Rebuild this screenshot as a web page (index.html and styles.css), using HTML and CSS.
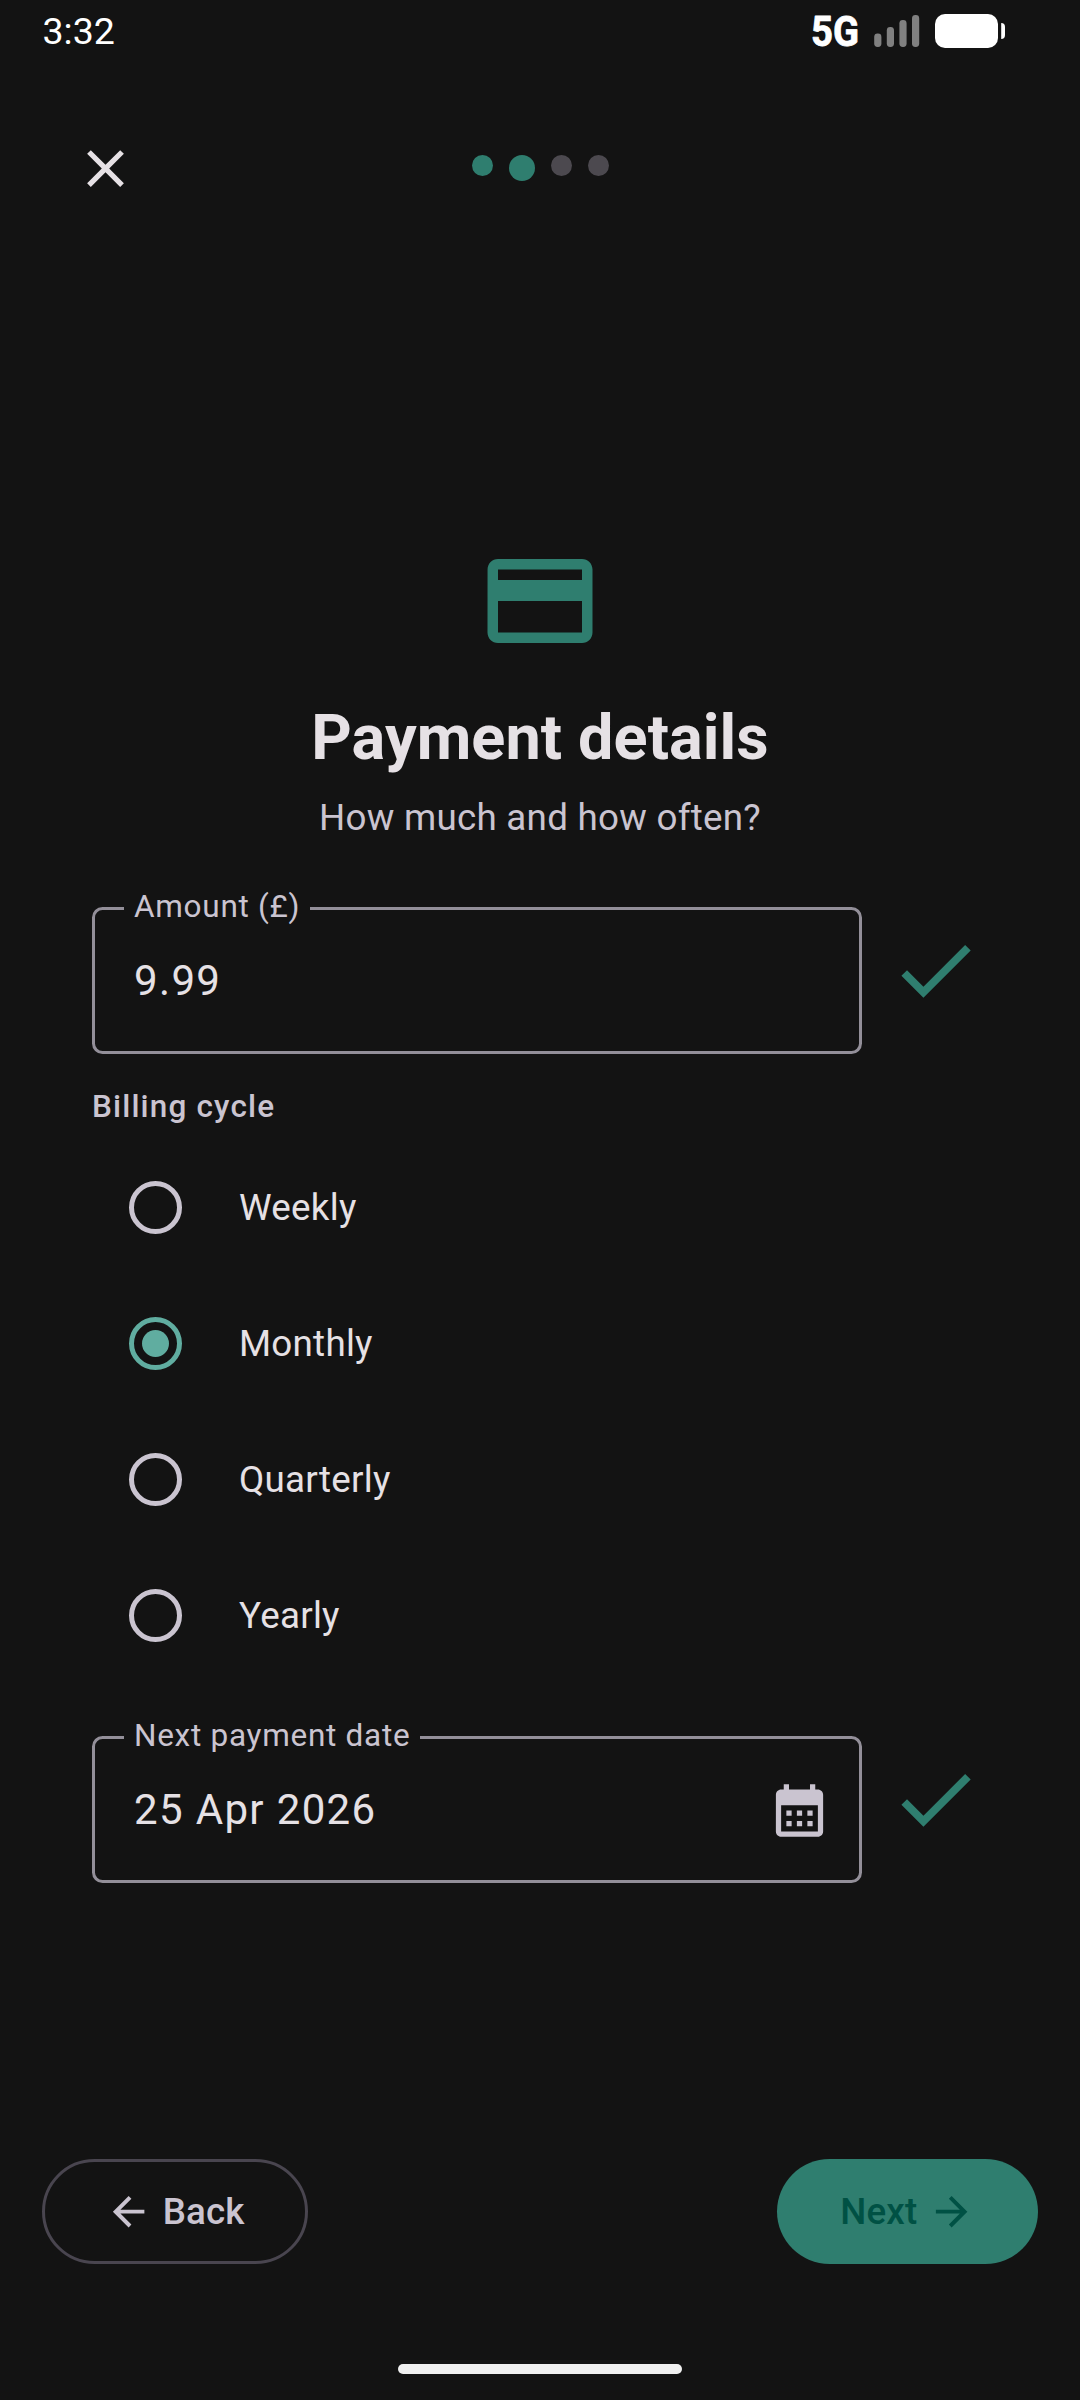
FILE: index.html
```html
<!DOCTYPE html>
<html lang="en">
<head>
<meta charset="utf-8">
<title>Payment details</title>
<link rel="stylesheet" href="styles.css">
</head>
<body>
<div class="screen">
  <div class="status-bar">
    <span class="clock">3:32</span>
    <svg class="status-icons" width="195" height="62" viewBox="-1 0 195 62" aria-label="Signal and battery">
      <text class="network" x="-1" y="46" textLength="48" lengthAdjust="spacingAndGlyphs">5G</text>
      <g fill="#808080">
        <rect x="62.2" y="33.5" width="7.2" height="13.5" rx="3.4"/>
        <rect x="74.8" y="27" width="7.2" height="20" rx="3.4"/>
        <rect x="87.4" y="20" width="7.2" height="27" rx="3.4"/>
        <rect x="100" y="15" width="7.2" height="32" rx="3.4"/>
      </g>
      <rect x="123" y="14" width="63" height="34" rx="10" fill="#fff"/>
      <path d="M189.2 23c2.600 0 3.800 1.500 3.800 4v8c0 2.500-1.200 4-3.800 4z" fill="#fff"/>
    </svg>
  </div>

  <header class="top-bar">
    <button class="close" aria-label="Close">
      <svg viewBox="0 0 24 24"><path d="M19 6.410L17.590 5 12 10.590 6.410 5 5 6.410 10.590 12 5 17.590 6.410 19 12 13.410 17.590 19 19 17.590 13.410 12z"/></svg>
    </button>
    <div class="steps">
      <span class="step done"></span>
      <span class="step current"></span>
      <span class="step"></span>
      <span class="step"></span>
    </div>
  </header>

  <main class="content">
    <svg class="card-icon" viewBox="0 0 24 24"><path d="M20 4H4c-1.110 0-1.990.89-1.990 2L2 18c0 1.110.89 2 2 2h16c1.110 0 2-.89 2-2V6c0-1.110-.89-2-2-2zm0 14H4v-6h16v6zm0-10H4V6h16v2z"/></svg>
    <h1 class="title">Payment details</h1>
    <p class="subtitle">How much and how often?</p>

    <div class="field-row">
      <fieldset class="field">
        <legend class="field-label">Amount (£)</legend>
        <span class="field-value">9.99</span>
      </fieldset>
      <svg class="check" viewBox="0 0 24 24"><path d="M9 16.170L4.830 12l-1.420 1.410L9 19 21 7l-1.410-1.410z"/></svg>
    </div>

    <h2 class="section-label">Billing cycle</h2>
    <div class="options">
      <label class="option"><span class="radio"></span>Weekly</label>
      <label class="option"><span class="radio selected"></span>Monthly</label>
      <label class="option"><span class="radio"></span>Quarterly</label>
      <label class="option"><span class="radio"></span>Yearly</label>
    </div>

    <div class="field-row">
      <fieldset class="field">
        <legend class="field-label">Next payment date</legend>
        <span class="field-value">25 Apr 2026</span>
        <svg class="calendar" viewBox="0 0 24 24"><path fill-rule="evenodd" d="M19 4h-1V2h-2v2H8V2H6v2H5c-1.110 0-1.990.9-1.990 2L3 20c0 1.100.89 2 2 2h14c1.100 0 2-.9 2-2V6c0-1.100-.9-2-2-2zm0 16H5V10h14v10zM9 14H7v-2h2v2zm4 0h-2v-2h2v2zm4 0h-2v-2h2v2zm-8 4H7v-2h2v2zm4 0h-2v-2h2v2zm4 0h-2v-2h2v2z"/></svg>
      </fieldset>
      <svg class="check" viewBox="0 0 24 24"><path d="M9 16.170L4.830 12l-1.420 1.410L9 19 21 7l-1.410-1.410z"/></svg>
    </div>
  </main>

  <footer class="actions">
    <button class="btn outlined">
      <svg viewBox="0 0 24 24"><path d="M20 11H7.830l5.590-5.590L12 4l-8 8 8 8 1.410-1.410L7.830 13H20v-2z"/></svg>
      Back
    </button>
    <button class="btn filled">
      Next
      <svg viewBox="0 0 24 24"><path d="M12 4l-1.410 1.410L16.170 11H4v2h12.170l-5.580 5.590L12 20l8-8z"/></svg>
    </button>
  </footer>
  <div class="home-indicator"></div>
</div>
</body>
</html>
```
FILE: styles.css
```css
* {
  box-sizing: border-box;
}

body {
  margin: 0;
  background: #131313;
  color: #e6e1e5;
  font-family: Roboto, "Noto Sans", sans-serif;
  font-size: 36.75px;
}

button {
  margin: 0;
  padding: 0;
  border: 0;
  background: none;
  font: inherit;
  color: inherit;
}

svg {
  display: block;
  flex: none;
  fill: currentColor;
}

.screen {
  display: flex;
  flex-direction: column;
  width: 1080px;
  height: 2400px;
  overflow: hidden;
}

/* Status bar */
.status-bar {
  display: flex;
  justify-content: space-between;
  align-items: center;
  height: 62px;
  padding: 0 74px 0 42.500px;
  color: #fff;
}

.clock {
  margin-top: -1px;
  font-size: 37.500px;
}

.network {
  font-size: 43px;
  font-weight: 700;
  stroke: #fff;
  stroke-width: 0.800px;
  stroke-linejoin: round;
}

/* Close button and step dots */
.top-bar {
  display: grid;
  grid-template-columns: 1fr auto 1fr;
  align-items: start;
  height: 138px;
  padding: 75px 73px 0 74px;
}

.close {
  justify-self: start;
}

.close svg {
  width: 63px;
  height: 63px;
}

.steps {
  display: flex;
  align-items: flex-start;
  gap: 16px;
  margin-top: 18px;
}

.step {
  width: 21px;
  height: 21px;
  border-radius: 50%;
  background: #4c494f;
}

.step.done {
  background: #2f7e6f;
}

.step.current {
  width: 26px;
  height: 26px;
  background: #2f7e6f;
}

/* Form */
.content {
  display: flex;
  flex-direction: column;
  padding: 338px 92px 0;
}

.card-icon {
  align-self: center;
  width: 126px;
  height: 126px;
  color: #2f7e6f;
}

.title {
  margin: 31.500px 0 0;
  font-size: 63px;
  font-weight: 700;
  letter-spacing: 0.080px;
  line-height: 84px;
  text-align: center;
}

.subtitle {
  margin: 12.500px 0 41.500px;
  color: #cac4d0;
  letter-spacing: 0.262px;
  line-height: 52.500px;
  text-align: center;
}

.field-row {
  display: flex;
  align-items: center;
  gap: 26.250px;
}

.field {
  display: flex;
  justify-content: space-between;
  align-items: center;
  width: 770px;
  height: 147px;
  margin: 21px 0 0;
  padding: 0 28px 0 29px;
  border: 3px solid #938f99;
  border-radius: 10.500px;
}

/* The label sits on the border line, so its box is only as tall as the border */
.field-label {
  height: 3px;
  padding: 0 10px;
  color: #cac4d0;
  font-size: 31.500px;
  letter-spacing: 0.720px;
  line-height: 0;
  white-space: nowrap;
}

.field-value {
  padding-left: 10px;
  font-size: 42px;
  letter-spacing: 1.350px;
}

.calendar {
  width: 63px;
  height: 63px;
  margin-top: 1px;
  color: #cac4d0;
}

.check {
  width: 94.500px;
  height: 94.500px;
  color: #2f7e6f;
}

.section-label {
  margin: 32px 0 11.500px;
  color: #cac4d0;
  font-size: 31.500px;
  font-weight: 500;
  letter-spacing: 1.150px;
  line-height: 42px;
}

.options {
  display: flex;
  flex-direction: column;
  margin-bottom: 10.500px;
}

.options + .field-row {
  margin-top: 21px;
}

.option {
  display: flex;
  align-items: center;
  gap: 57px;
  height: 136px;
  padding-left: 37px;
  letter-spacing: 0.262px;
}

.radio {
  display: grid;
  place-items: center;
  width: 53px;
  height: 53px;
  border: 5.250px solid #cac4d0;
  border-radius: 50%;
}

.radio.selected {
  border-color: #60ada0;
}

.radio.selected::after {
  content: "";
  width: 27px;
  height: 27px;
  border-radius: 50%;
  background: #60ada0;
}

/* Bottom buttons */
.actions {
  display: flex;
  justify-content: space-between;
  margin-top: 276px;
  padding: 0 42px;
}

.btn {
  display: flex;
  align-items: center;
  gap: 10.500px;
  height: 105px;
  border-radius: 52.500px;
  font-weight: 500;
  letter-spacing: 0.100px;
}

.btn svg {
  width: 47.250px;
  height: 47.250px;
}

.outlined {
  padding: 0 60px;
  border: 3px solid #49454f;
  color: #cac4d0;
}

.filled {
  padding: 0 63px;
  background: #2f7e6f;
  color: #005144;
}

.home-indicator {
  align-self: center;
  width: 284px;
  height: 10px;
  margin-top: 100px;
  border-radius: 5px;
  background: #f0f0f0;
}
```
